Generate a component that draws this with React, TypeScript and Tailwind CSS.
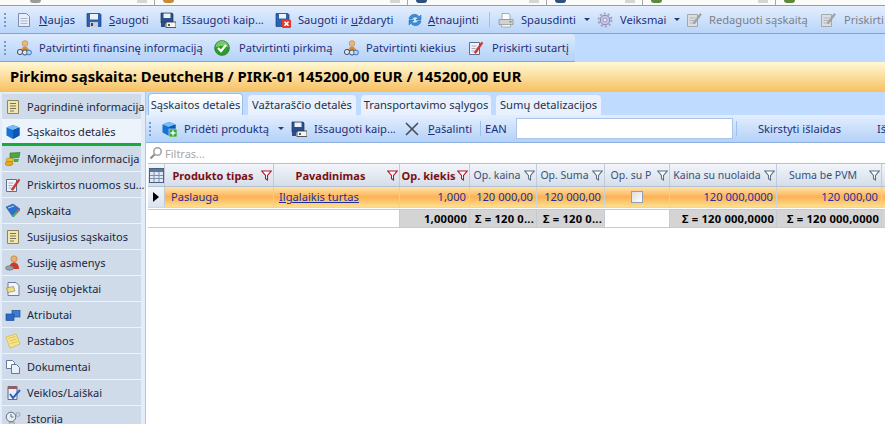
import React from "react";

type IP = { className?: string };
const S = ({ children, className = "" }: { children: React.ReactNode; className?: string }) => (
  <svg viewBox="0 0 16 16" width="16" height="16" className={"shrink-0 " + className}>{children}</svg>
);
const DocI = () => (<S><path d="M2.500 1.500h8l3 3v10h-11z" fill="#e8eef8" stroke="#7d8fb0" /><path d="M4.500 6.500h7M4.500 9h7M4.500 11.500h7" stroke="#a9b8d2" /></S>);
const Floppy = ({ body = "#2a62b4" }: { body?: string }) => (
  <S><path d="M1 1.500h13l1 1v12H1z" fill={body} stroke="#1d3f7c" strokeWidth=".7" /><rect x="4" y="2" width="8" height="5.500" fill="#eef1f6" /><rect x="4" y="10" width="8" height="5" fill="#c8ced8" /><rect x="5" y="11" width="2" height="3" fill="#39465c" /></S>
);
const FloppyAs = () => (
  <S><path d="M1 1h11l1 1v9H1z" fill="#2b4f8c" stroke="#1d3558" strokeWidth=".7" /><rect x="3.500" y="1.500" width="7" height="4.500" fill="#eef1f6" /><rect x="6" y="10" width="10" height="5.500" fill="#f4f4f4" stroke="#333" strokeWidth=".8" /><path d="M8 12l2 2M10 12l-2 2" stroke="#333" strokeWidth=".8" /><path d="M1 11h4v4H1z" fill="#2b4f8c" /></S>
);
const FloppyX = () => (
  <S><path d="M1 1.500h12l1 1v12H1z" fill="#2a62b4" stroke="#1d3f7c" strokeWidth=".7" /><rect x="4" y="2" width="7" height="4.500" fill="#eef1f6" /><rect x="7" y="7.500" width="9" height="8.500" rx="1" fill="#e23b2e" /><path d="M9.500 9.800l4 4M13.500 9.800l-4 4" stroke="#fff" strokeWidth="1.600" /></S>
);
const Refresh = () => (
  <S><path d="M2 7C2.500 3.500 6 1.500 9.500 2.700c1.300.5 2 1.100 2.700 2L14 3v5H9l1.800-1.800C9.500 4.500 6.500 4.300 5 7z" fill="#3b8fd8" stroke="#1f65ad" strokeWidth=".5" /><path d="M14 9c-.5 3.500-4 5.500-7.500 4.300-1.300-.5-2-1.100-2.700-2L2 13V8h5L5.200 9.800C6.500 11.500 9.500 11.700 11 9z" fill="#3b8fd8" stroke="#1f65ad" strokeWidth=".5" /></S>
);
const Printer = () => (
  <S><path d="M4 1.500h7l1 2v4H4z" fill="#fbfbfb" stroke="#999" strokeWidth=".8" /><path d="M1 7.500h14v5H1z" fill="#cfd2d6" stroke="#8c9096" strokeWidth=".8" /><path d="M3.500 12.500h9v2.500h-9z" fill="#f4f4f4" stroke="#999" strokeWidth=".7" /><rect x="11.500" y="9" width="2" height="1.400" fill="#4fae43" /></S>
);
const Gear = () => (
  <S><circle cx="8" cy="8" r="4.800" fill="#c8c8e4" stroke="#8484ae" /><circle cx="8" cy="8" r="6.500" fill="none" stroke="#a0a0c8" strokeWidth="2" strokeDasharray="2 2.080" /><circle cx="8" cy="8" r="2" fill="#eeeef8" stroke="#8484ae" strokeWidth=".8" /></S>
);
const EditGrey = () => (
  <S><path d="M1.500 2.500h10v12h-10z" fill="#dbdee2" stroke="#a4a8ae" /><path d="M3.500 6h6M3.500 8.500h5M3.500 11h4" stroke="#b1b4b9" /><path d="M7 11l7-9.500 1.500 1L8.500 12z" fill="#a6a6a6" stroke="#8c8c8c" strokeWidth=".5" /></S>
);
const SignPen = () => (
  <S><path d="M1.500 2.500h10v12h-10z" fill="#f1f3f9" stroke="#5f6d8e" /><path d="M3.500 6h5M3.500 8.500h4M3.500 11h3" stroke="#9eaac5" /><path d="M6 12.500l7.500-10.500 1.500 1L8 13.500z" fill="#d8352a" stroke="#a82318" strokeWidth=".4" /></S>
);
const Users = () => (
  <S><circle cx="9" cy="3.500" r="2.800" fill="#eeb877" stroke="#a96f2a" strokeWidth=".5" /><path d="M5 11c0-3 2-4.500 4-4.500s4 1.500 4 4.500z" fill="#e08a2c" /><circle cx="4" cy="12" r="2.600" fill="#dfe6f2" stroke="#3c4f70" strokeWidth="1" /><circle cx="9" cy="12.500" r="2.600" fill="#dfe6f2" stroke="#3c4f70" strokeWidth="1" /><circle cx="13" cy="12.500" r="2.400" fill="#b9d1f0" stroke="#3f74b5" strokeWidth="1" /></S>
);
const Check = () => (
  <S><circle cx="8" cy="8" r="7.500" fill="#2d9a2a" stroke="#1c701c" strokeWidth=".5" /><path d="M1.500 7.500C2 3 5 1 8 1s6 2 6.500 6.500C11 5.500 5 5.500 1.500 7.500z" fill="#8bd579" opacity=".8" /><path d="M4 8l3 3 5-6" stroke="#fff" strokeWidth="2.200" fill="none" /></S>
);
const Cube = ({ plus = false }: { plus?: boolean }) => (
  <S><path d="M1.500 3.500L8 1l6.500 2.500v8L8 15l-6.500-3.500z" fill="#1573d6" /><path d="M1.500 3.500L8 1l6.500 2.500L8 6z" fill="#79bdf5" /><path d="M8 6v9l6.500-3.500v-8z" fill="#0b57b3" />{plus && <><rect x="8" y="8" width="8" height="8" fill="#3aa83e" stroke="#fff" strokeWidth=".5" /><path d="M12 9.500v5M9.500 12h5" stroke="#fff" strokeWidth="1.500" /></>}</S>
);
const NoteI = () => (<S><path d="M2.500 1.500h11v13h-11z" fill="#f3e7ae" stroke="#8d8760" /><path d="M5 4.500h6M5 7h6M5 9.500h6M5 12h4" stroke="#77735a" /></S>);
const Money = () => (<S><path d="M5 2l10-.5-1 5-9 .5z" fill="#4caa3c" stroke="#2c7526" strokeWidth=".6" /><ellipse cx="5" cy="9" rx="4" ry="2" fill="#f0bf2e" stroke="#a87b12" strokeWidth=".6" /><ellipse cx="4" cy="12.500" rx="4" ry="2.200" fill="#e5ab20" stroke="#a87b12" strokeWidth=".6" /><path d="M9 8h5l-1 3H9z" fill="#4caa3c" /></S>);
const Accounting = () => (<S><path d="M1 4l7-3 7 5-7 8z" fill="#2a72cc" stroke="#1b4d90" strokeWidth=".5" /><path d="M3 5l6-2" stroke="#b9d9f7" /><path d="M7 13l6.500-7 1.500 1.500L9 14z" fill="#54b24a" /><path d="M11 9l3-3 1 1-3 3z" fill="#d8544a" /></S>);
const Person = () => (<S><circle cx="9" cy="4" r="3.200" fill="#e7b06f" stroke="#a96f2a" strokeWidth=".5" /><path d="M4 14c0-4 2-6.500 5-6.500s5 2.500 5 6.500z" fill="#cf3a24" /><ellipse cx="4.500" cy="13" rx="4" ry="2.200" fill="#9aa0aa" stroke="#616771" strokeWidth=".6" /></S>);
const DocNote = () => (<S><path d="M3 1.500h8l3 3v10H3z" fill="#f1f4fa" stroke="#6e7e9c" /><path d="M1.500 7l7-1.500 1.500 4.500-7 1.500z" fill="#ecdc84" stroke="#8d8244" strokeWidth=".6" /></S>);
const Windows = () => (<S><rect x="7" y="3.500" width="8" height="6.500" fill="#3b7fd4" stroke="#1e4f94" strokeWidth=".7" /><rect x="1" y="7" width="8" height="6.500" fill="#2a6cc4" stroke="#1e4f94" strokeWidth=".7" /></S>);
const Sticky = () => (<S><path d="M1 4L11 1l4 10-10 4z" fill="#f8e587" stroke="#cdb445" strokeWidth=".7" /><path d="M3.500 5.500l7-2M4.500 8l7-2M5.500 10.500l7-2" stroke="#dcc35a" /></S>);
const Docs = () => (<S><path d="M1.500 1.500h6l2 2v6h-8z" fill="#fff" stroke="#65779c" /><path d="M6.500 5.500h5l3 3v6h-8z" fill="#e8effa" stroke="#65779c" /></S>);
const Calendar = () => (<S><path d="M3 1.500h9v13H3z" fill="#e9edf5" stroke="#5d6b88" /><rect x="3" y="1.500" width="9" height="2.500" fill="#a45a5a" /><path d="M5 9l3 4 7-8" stroke="#2a62c4" strokeWidth="2" fill="none" /></S>);
const Clock = () => (<S><circle cx="6" cy="6" r="4.800" fill="#e8edf2" stroke="#617080" /><path d="M6 3v3h2.500" stroke="#617080" fill="none" /><path d="M3 15h7l-1-4H5z" fill="#c3cbd4" stroke="#7c8894" strokeWidth=".6" /><circle cx="13" cy="3.500" r="2" fill="#cfd8e0" stroke="#7c8894" strokeWidth=".6" /></S>);
const XI = () => (<S><path d="M2 2l12 12M14 2L2 14" stroke="#4a515c" strokeWidth="1.700" /></S>);
const Table = () => (<svg width="15" height="15" viewBox="0 0 15 15" className="shrink-0"><rect x=".5" y=".5" width="14" height="14" fill="#dfe8f3" stroke="#49607f" /><rect x="1" y="1" width="13" height="3" fill="#5c789b" /><path d="M1 7.500h13M1 10.500h13M5 4v10M10 4v10" stroke="#7a92b0" /></svg>);
const Funnel = ({ red = false }: IP & { red?: boolean }) => (<svg width="11" height="11" viewBox="0 0 11 11" className="shrink-0"><path d="M.8 1h9.400L6.500 5.500V10l-2-1.200V5.500z" fill="#fff" stroke={red ? "#b3122a" : "#5b6f88"} strokeWidth="1.100" /></svg>);
const Arrow = () => <span className="w-0 h-0 border-x-[3px] border-x-transparent border-t-[3px] border-t-[#1b3f78] shrink-0" />;
const Grip = () => (
  <div className="w-[3px] h-[14px] shrink-0 flex flex-col justify-between">
    {[0, 1, 2, 3].map((i) => <span key={i} className="w-[2px] h-[2px] bg-[#6f9bd6]" />)}
  </div>
);
const Sep = ({ className = "" }: { className?: string }) => <span className={"w-px h-[15px] bg-[#9dc0ec] shrink-0 " + className} />;

const Item = ({ icon, w, gap = "gap-[7px]", children, grey = false }: { icon?: React.ReactNode; w: string; gap?: string; children: React.ReactNode; grey?: boolean }) => (
  <div className={"flex items-center shrink-0 whitespace-nowrap " + w + " " + gap + " " + (grey ? "text-[#7d7f88]" : "text-[#1e2f78]")}>
    {icon}<span>{children}</span>
  </div>
);

const Top = ({ w, children, end = true }: { w: string; children?: React.ReactNode; end?: boolean }) => (
  <div className={"h-[5px] shrink-0 flex items-start overflow-hidden " + w + " " + (end ? "border-r border-[#a8a8a8]" : "")}>
    {children}
  </div>
);
const Mini = () => <span className="w-[10px] h-[3px] bg-[#d6d6d6] ml-auto mr-[7px] shrink-0" />;
const Blob = ({ c, ml }: { c: string; ml: string }) => <span className={"w-[11px] h-[3px] rounded-b-sm shrink-0 " + c + " " + ml} />;

const side: [string, React.ReactNode][] = [
  ["Pagrindinė informacija", <NoteI />],
  ["Sąskaitos detalės", <Cube />],
  ["Mokėjimo informacija", <Money />],
  ["Priskirtos nuomos su...", <SignPen />],
  ["Apskaita", <Accounting />],
  ["Susijusios sąskaitos", <NoteI />],
  ["Susiję asmenys", <Person />],
  ["Susiję objektai", <DocNote />],
  ["Atributai", <Windows />],
  ["Pastabos", <Sticky />],
  ["Dokumentai", <Docs />],
  ["Veiklos/Laiškai", <Calendar />],
  ["Istorija", <Clock />],
];

const grid = "grid grid-cols-[17px_109px_126px_70px_67px_68px_65px_107px_105px_60px] w-[794px] shrink-0";
const Hd = ({ t, red = false }: { t: string; red?: boolean }) => (
  <div className={"h-full flex items-center pr-[1px] border-r border-[#c0cad8] whitespace-nowrap overflow-hidden " + (red ? "font-bold text-[11px] text-[#7b0f12]" : "text-[10.5px] text-[#39507a]")}>
    <span className="flex-1 text-center">{t}</span>
    <Funnel red={red} />
  </div>
);
const Cell = ({ children, right = true, cls = "" }: { children?: React.ReactNode; right?: boolean; cls?: string }) => (
  <div className={"h-full flex items-center px-[3px] border-r border-[#c9d2df] text-[#1e2f9a] overflow-hidden whitespace-nowrap " + (right ? "justify-end " : "") + cls}>{children}</div>
);
const Sum = ({ t, white = false }: { t?: string; white?: boolean }) => (
  <div className={"h-full flex items-center justify-end px-[2px] border-r border-[#c4cbd6] font-bold tracking-[0.2px] whitespace-nowrap overflow-hidden text-black " + (white ? "bg-white" : "bg-[#d4d4d4]")}>{t}</div>
);

export default function App() {
  return (
    <div className="w-[885px] h-[424px] overflow-hidden flex flex-col bg-[#bfdbff] text-[11.15px] leading-none font-['Noto_Sans','Open_Sans',sans-serif]">
      <div className="h-[6px] shrink-0 flex bg-[#fbfbfa] border-b border-[#7fa1cf]">
        <Top w="w-[155px]"><Blob c="bg-[#9a9a9a]" ml="ml-[30px]" /><Mini /></Top>
        <Top w="w-[253px]"><Blob c="bg-[#c98a3a]" ml="ml-[8px]" /><Mini /></Top>
        <Top w="w-[139px]"><Blob c="bg-[#2f4f80]" ml="ml-[8px]" /><Mini /></Top>
        <Top w="w-[96px]"><Blob c="bg-[#2f4f80]" ml="ml-[8px]" /><Mini /></Top>
        <Top w="w-[133px]"><Blob c="bg-[#5c8a3a]" ml="ml-[8px]" /><Mini /></Top>
        <Top w="w-[109px]" end={false}><Blob c="bg-[#5c8a3a]" ml="ml-[8px]" /></Top>
      </div>

      <div className="h-[28px] shrink-0 flex items-center pl-[4px] bg-gradient-to-b from-[#e3eefe] to-[#b9d5f9] border-b border-[#7fa5d6] overflow-hidden">
        <Grip />
        <div className="w-[9px] shrink-0" />
        <Item w="w-[70px]" icon={<DocI />}><u>N</u>aujas</Item>
        <Item w="w-[74px]" icon={<Floppy />}><u>S</u>augoti</Item>
        <Item w="w-[115px]" gap="gap-[6px]" icon={<FloppyAs />}>Išsaugoti kaip...</Item>
        <Item w="w-[132px]" gap="gap-[7px]" icon={<FloppyX />}>Saugoti ir <u>u</u>ždaryti</Item>
        <Item w="w-[82px]" gap="gap-[5px]" icon={<Refresh />}><u>A</u>tnaujinti</Item>
        <Sep />
        <div className="w-[8px] shrink-0" />
        <Item w="w-[86px]" icon={<Printer />}>Spausdinti</Item>
        <Arrow />
        <div className="w-[7px] shrink-0" />
        <Item w="w-[77px]" gap="gap-[7px]" icon={<Gear />}>Veiksmai</Item>
        <Arrow />
        <div className="w-[6px] shrink-0" />
        <Item w="w-[134px]" gap="gap-[7px]" grey icon={<EditGrey />}>Redaguoti sąskaitą</Item>
        <Item w="w-[70px]" gap="gap-[8px]" grey icon={<EditGrey />}>Priskirti</Item>
      </div>

      <div className="h-[28px] shrink-0 flex">
        <div className="w-[575px] flex items-center pl-[4px] rounded-tr-sm bg-gradient-to-b from-[#dceafd] to-[#b5d2f8] border-b border-[#7fa5d6]">
          <Grip />
          <div className="w-[9px] shrink-0" />
          <Item w="w-[198px]" icon={<Users />}>Patvirtinti finansinę informaciją</Item>
          <Item w="w-[129px]" gap="gap-[9px]" icon={<Check />}>Patvirtinti pirkimą</Item>
          <Item w="w-[125px]" icon={<Users />}>Patvirtinti kiekius</Item>
          <Item w="w-[100px]" gap="gap-[8px]" icon={<SignPen />}>Priskirti sutartį</Item>
        </div>
      </div>

      <div className="h-[30px] shrink-0 flex items-center pl-[10px] pb-[2px] bg-gradient-to-b from-[#fff8d4] to-[#f6c05e] text-[14.8px] font-bold text-black">
        Pirkimo sąskaita: DeutcheHB / PIRK-01 145200,00 EUR / 145200,00 EUR
      </div>

      <div className="flex-1 flex min-h-0">
        <div className="w-[146px] shrink-0 flex flex-col pl-[2px] pt-[2px] pr-[4px] bg-[#e3edfa] border-r border-[#aac8ef] overflow-hidden text-[11px]">
          {side.map(([t, ic], i) => (
            <div key={t} className={"h-[26px] shrink-0 flex items-center gap-[6px] pl-[3px] whitespace-nowrap text-[#1a2740] border-b " + (i === 1 ? "bg-[#edf3fb] border-b-[3px] border-[#16ab3a]" : "bg-[#cfdbe9] border-[#eef3f9]")}>
              {ic}<span>{t}</span>
            </div>
          ))}
        </div>

        <div className="flex-1 flex flex-col min-w-0 overflow-hidden">
          <div className="h-[23px] shrink-0 flex items-end pl-[2px] gap-[5px] bg-[#bfdbff] text-[#24304a]">
            <div className="h-[22px] w-[95px] flex items-center justify-center bg-gradient-to-b from-white to-[#e4effd] border border-b-0 border-[#9dbde8] rounded-t-sm">Sąskaitos detalės</div>
            <div className="h-[20px] w-[108px] flex items-center justify-center bg-[#e8f1fd] rounded-t-sm">Važtaraščio detalės</div>
            <div className="h-[20px] w-[130px] flex items-center justify-center bg-[#e8f1fd] rounded-t-sm whitespace-nowrap">Transportavimo sąlygos</div>
            <div className="h-[20px] w-[105px] flex items-center justify-center bg-[#e8f1fd] rounded-t-sm whitespace-nowrap">Sumų detalizacijos</div>
          </div>
          <div className="h-[28px] shrink-0 flex items-center pl-[3px] bg-gradient-to-b from-[#e3eefe] to-[#b4d1f8] border-b border-[#8db0de] overflow-hidden">
            <Grip />
            <div className="w-[9px] shrink-0" />
            <Item w="w-[117px]" gap="gap-[7px]" icon={<Cube plus />}>Pridėti produktą</Item>
            <Arrow />
            <div className="w-[7px] shrink-0" />
            <Item w="w-[113px]" gap="gap-[7px]" icon={<FloppyAs />}>Išsaugoti kaip...</Item>
            <Item w="w-[76px]" gap="gap-[8px]" icon={<XI />}><u>P</u>ašalinti</Item>
            <Sep />
            <div className="w-[4px] shrink-0" />
            <span className="text-[#1e2f78] w-[31px] shrink-0">EAN</span>
            <div className="w-[217px] h-[21px] shrink-0 bg-white border border-[#a9c4e6]" />
            <Sep className="ml-[3px]" />
            <span className="text-[#1e2f78] ml-[21px] w-[119px] shrink-0 whitespace-nowrap">Skirstyti išlaidas</span>
            <span className="text-[#1e2f78] shrink-0">Iš</span>
          </div>
          <div className="h-[20px] shrink-0 flex items-center pl-[3px] gap-[2px] bg-white text-[#a8a8a8] text-[11px]">
            <svg width="14" height="14" viewBox="0 0 14 14" className="shrink-0"><circle cx="8.500" cy="5.500" r="3.700" fill="none" stroke="#a3a3a3" strokeWidth="1.600" /><path d="M5.500 8.500L1.500 12.500" stroke="#8c8c8c" strokeWidth="2.200" /></svg>
            Filtras...
          </div>
          <div className="flex-1 min-h-0 pl-[2px] bg-white overflow-hidden">
            <div className={grid + " h-[24px] bg-gradient-to-b from-[#f2f5fa] to-[#d5dee9] border-y border-[#b3c0d2]"}>
              <div className="h-full flex items-center justify-center border-r border-[#c0cad8]"><Table /></div>
              <Hd t="Produkto tipas" red />
              <Hd t="Pavadinimas" red />
              <Hd t="Op. kiekis" red />
              <Hd t="Op. kaina" />
              <Hd t="Op. Suma" />
              <Hd t="Op. su P" />
              <Hd t="Kaina su nuolaida" />
              <Hd t="Suma be PVM" />
              <Hd t="" />
            </div>
            <div className={grid + " h-[21px] bg-gradient-to-b from-[#fde3a8] via-[#fbb253] to-[#ffdf8e] border-b border-[#d0d7e2]"}>
              <div className="h-full flex items-center justify-center bg-gradient-to-b from-[#f2f5fa] to-[#dbe3ee] border-r border-[#c0cad8]">
                <span className="w-0 h-0 border-y-[5px] border-y-transparent border-l-[6px] border-l-black" />
              </div>
              <Cell right={false} cls="pl-[6px]">Paslauga</Cell>
              <Cell right={false} cls="pl-[5px]"><u>Ilgalaikis turtas</u></Cell>
              <Cell>1,000</Cell>
              <Cell>120 000,00</Cell>
              <Cell>120 000,00</Cell>
              <Cell right={false} cls="justify-center"><span className="w-[12px] h-[12px] border border-[#8e9fb8] bg-gradient-to-br from-[#dcdcdc] to-white" /></Cell>
              <Cell>120 000,0000</Cell>
              <Cell>120 000,00</Cell>
              <Cell />
            </div>
            <div className="h-[1px] w-[794px] bg-white" />
            <div className={grid + " h-[19px] text-[11.2px] border-y border-[#c4cbd6]"}>
              <div className="col-span-3 h-full bg-white border-r border-[#c4cbd6]" />
              <Sum t="1,00000" />
              <Sum t="Σ = 120 0..." />
              <Sum t="Σ = 120 0..." />
              <Sum white />
              <Sum t="Σ = 120 000,0000" />
              <Sum t="Σ = 120 000,0000" />
              <Sum />
            </div>
          </div>
        </div>
      </div>
    </div>
  );
}
